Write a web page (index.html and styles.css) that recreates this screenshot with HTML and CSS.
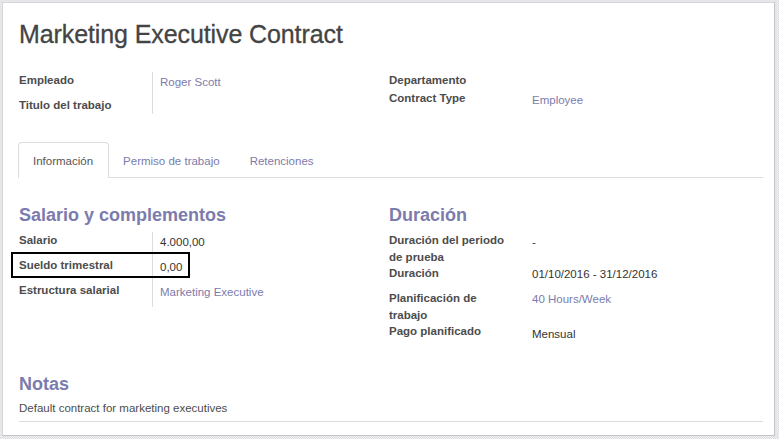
FILE: index.html
```html
<!DOCTYPE html>
<html lang="es">
<head>
<meta charset="utf-8">
<title>Marketing Executive Contract</title>
<link rel="stylesheet" href="styles.css">
</head>
<body>
<div class="sheet">
  <h1 class="title">Marketing Executive Contract</h1>

  <div class="groups top-groups">
    <div class="group left">
      <div class="row r-emp">
        <div class="label">Empleado</div>
        <div class="value bordered link">Roger Scott</div>
      </div>
      <div class="row r-job">
        <div class="label">Titulo del trabajo</div>
        <div class="value bordered"></div>
      </div>
    </div>
    <div class="group right">
      <div class="row r-dep">
        <div class="label">Departamento</div>
        <div class="value"></div>
      </div>
      <div class="row r-type">
        <div class="label">Contract Type</div>
        <div class="value link">Employee</div>
      </div>
    </div>
  </div>

  <ul class="tabs">
    <li class="tab active">Información</li>
    <li class="tab">Permiso de trabajo</li>
    <li class="tab">Retenciones</li>
  </ul>

  <div class="groups">
    <div class="group left">
      <h2 class="section">Salario y complementos</h2>
      <div class="row r25">
        <div class="label">Salario</div>
        <div class="value bordered">4.000,00</div>
      </div>
      <div class="row r25 highlighted">
        <div class="label">Sueldo trimestral</div>
        <div class="value bordered">0,00</div>
        <div class="mark"></div>
      </div>
      <div class="row r25">
        <div class="label">Estructura salarial</div>
        <div class="value bordered link">Marketing Executive</div>
      </div>
    </div>
    <div class="group right">
      <h2 class="section">Duración</h2>
      <div class="row r-trial">
        <div class="label">Duración del periodo de prueba</div>
        <div class="value">-</div>
      </div>
      <div class="row r-dur">
        <div class="label">Duración</div>
        <div class="value">01/10/2016 - 31/12/2016</div>
      </div>
      <div class="row r-plan">
        <div class="label">Planificación de trabajo</div>
        <div class="value link">40 Hours/Week</div>
      </div>
      <div class="row r-pay">
        <div class="label">Pago planificado</div>
        <div class="value v-pay">Mensual</div>
      </div>
    </div>
  </div>

  <h2 class="section notes-title">Notas</h2>
  <p class="notes">Default contract for marketing executives</p>
</div>
</body>
</html>
```

FILE: styles.css
```css
* { box-sizing: border-box; }

html, body {
  margin: 0;
  padding: 0;
  height: 100%;
}

body {
  font-family: "Liberation Sans", Arial, sans-serif;
  font-size: 11.5px;
  color: #4c4c4c;
  background: repeating-conic-gradient(#dedee2 0 25%, #efeff1 0 50%) 0 0 / 2px 2px;
  overflow: hidden;
}

.sheet {
  margin: 2px 4px 3px 2px;
  height: 434px;
  background: #fff;
  border: 1px solid #d6d6d8;
  border-right-color: #c4c4c6;
  border-bottom-color: #c4c4c6;
  padding: 16px 11px 0 16px;
}

.title {
  margin: 0;
  font-size: 25px;
  line-height: 30px;
  font-weight: normal;
  color: #444;
  letter-spacing: -0.1px;
  -webkit-text-stroke: 0.3px #444;
}

.groups {
  display: grid;
  grid-template-columns: 370px 1fr;
}

.top-groups {
  margin-top: 23px;
}

.row {
  display: grid;
  align-items: start;
  position: relative;
}

.left .row { grid-template-columns: 133px 1fr; }
.right .row { grid-template-columns: 143px 1fr; }

.label {
  font-weight: bold;
  line-height: 17px;
  color: #4c4c4c;
  padding-right: 10px;
}

.right .label { padding-right: 24px; }

.value {
  line-height: 17px;
  padding-top: 2px;
  color: #333;
}

.value.bordered {
  border-left: 1px solid #dcdcdc;
  padding-left: 7px;
  align-self: stretch;
}

.link { color: #7c7bad; }

.r-emp { height: 25px; }
.r-job { height: 16px; }
.r-dep { height: 18px; }
.r-type { height: 25px; }

.tabs {
  list-style: none;
  margin: 27px 0 0;
  padding: 0;
  display: flex;
  border-bottom: 1px solid #dcdcdc;
}

.tab {
  padding: 10px 15px 7px 14px;
  line-height: 17px;
  border: 1px solid transparent;
  border-bottom: 0;
  color: #7c7bad;
  margin-left: -1px;
}

.tab.active {
  color: #555;
  border-color: #dcdcdc;
  border-radius: 4px 4px 0 0;
  background: #fff;
  margin-bottom: -1px;
  padding-bottom: 8px;
}

.groups:not(.top-groups) { margin-top: 26px; }

.section {
  margin: 0 0 6px;
  font-size: 18px;
  line-height: 22px;
  font-weight: bold;
  color: #7c7bad;
}

.r25 { height: 25px; }

.r-trial { height: 33px; }
.r-trial .label { line-height: 16.5px; }
.r-dur { height: 25px; }
.r-dur .value { padding-top: 1px; }
.r-plan { height: 33px; }
.r-plan .label { line-height: 16.5px; }
.r-plan .value { padding-top: 1px; }
.r-pay { height: 25px; }
.v-pay { padding-top: 3px; }

.mark {
  position: absolute;
  left: -8px;
  top: -5px;
  width: 179px;
  height: 26px;
  border: 2px solid #000;
  pointer-events: none;
}

.notes-title {
  margin-top: 25px;
  margin-bottom: 5px;
}

.notes {
  margin: 0;
  line-height: 17px;
  padding-bottom: 4px;
  border-bottom: 1px solid #dcdcdc;
  color: #4c4c4c;
}
```
